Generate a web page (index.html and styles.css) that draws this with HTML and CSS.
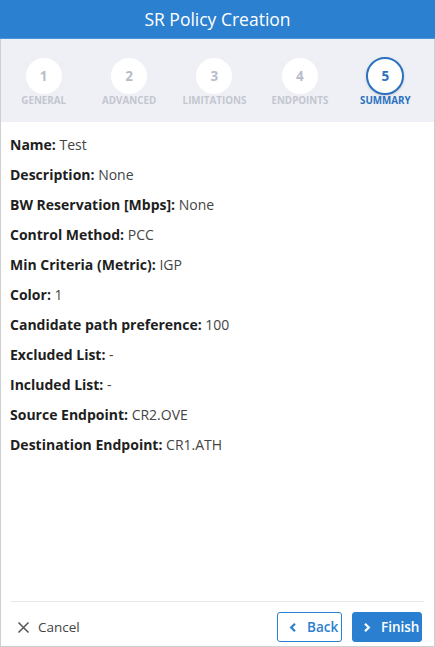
FILE: index.html
```html
<!DOCTYPE html>
<html>
<head>
<meta charset="utf-8">
<link rel="stylesheet" href="styles.css">
</head>
<body>
<div class="dialog">
  <div class="header">SR Policy Creation</div>
  <div class="stepper">
    <div class="step"><div class="circle">1</div><div class="label">General</div></div>
    <div class="step"><div class="circle">2</div><div class="label">Advanced</div></div>
    <div class="step"><div class="circle">3</div><div class="label">Limitations</div></div>
    <div class="step"><div class="circle">4</div><div class="label">Endpoints</div></div>
    <div class="step active"><div class="circle">5</div><div class="label">Summary</div></div>
  </div>
  <div class="content">
    <div class="row"><b>Name:</b> Test</div>
    <div class="row"><b>Description:</b> None</div>
    <div class="row"><b>BW Reservation [Mbps]:</b> None</div>
    <div class="row"><b>Control Method:</b> PCC</div>
    <div class="row"><b>Min Criteria (Metric):</b> IGP</div>
    <div class="row"><b>Color:</b> 1</div>
    <div class="row"><b>Candidate path preference:</b> 100</div>
    <div class="row"><b>Excluded List:</b> -</div>
    <div class="row"><b>Included List:</b> -</div>
    <div class="row"><b>Source Endpoint:</b> CR2.OVE</div>
    <div class="row"><b>Destination Endpoint:</b> CR1.ATH</div>
  </div>
  <div class="footer">
    <div class="cancel">
      <svg class="icon" width="13" height="13" viewBox="0 0 13 13"><path d="M1.5 1.5L11.5 11.5M11.5 1.5L1.5 11.5" stroke="#555" stroke-width="1.5" fill="none"/></svg>
      <span>Cancel</span>
    </div>
    <div class="actions">
      <div class="btn btn-back">
        <svg class="icon" width="8" height="11" viewBox="0 0 8 11"><path d="M6 1.8L2.2 5.5 6 9.2" stroke="#2b7fd0" stroke-width="2.2" fill="none"/></svg>
        <span>Back</span>
      </div>
      <div class="btn btn-finish">
        <svg class="icon" width="8" height="11" viewBox="0 0 8 11"><path d="M2 1.8L5.8 5.5 2 9.2" stroke="#fff" stroke-width="2.2" fill="none"/></svg>
        <span>Finish</span>
      </div>
    </div>
  </div>
</div>
</body>
</html>
```
FILE: styles.css
```css
* { box-sizing: border-box; }
html, body { margin: 0; padding: 0; background: #fff; }
body { font-family: "Open Sans", "Noto Sans", sans-serif; }

.dialog {
  width: 435px;
  height: 647px;
  border: 1px solid #cfcfcf;
  border-top: none;
  display: flex;
  flex-direction: column;
  background: #fff;
}

.header {
  height: 39px;
  margin: 0 -1px;
  background: #2b80d0;
  border-bottom: 1px solid #4b95db;
  color: #fff;
  font-size: 17.5px;
  display: flex;
  align-items: center;
  justify-content: center;
}

.stepper {
  height: 83px;
  background: #eff0f5;
  display: grid;
  grid-template-columns: repeat(5, 1fr);
  padding: 19px 6px 0 0;
}

.step {
  display: flex;
  flex-direction: column;
  align-items: center;
}

.circle {
  width: 36px;
  height: 36px;
  border-radius: 50%;
  background: #fff;
  color: #b9bdc9;
  font-weight: 700;
  font-size: 13.5px;
  display: flex;
  align-items: center;
  justify-content: center;
}

.label {
  margin-top: 0;
  font-size: 9.8px;
  font-weight: 700;
  color: #c3c6d0;
  text-transform: uppercase;
}

.step.active .circle {
  border: 2px solid #2a72bf;
  color: #2a72bf;
  width: 38px;
  height: 38px;
  margin-top: -1px;
  box-shadow: 0 1px 3px rgba(0,0,0,0.15);
}
.step.active .label { color: #2a72bf; margin-top: -1px; }

.content {
  flex: 1;
  padding: 13px 9px 0;
}

.row {
  height: 30px;
  font-size: 14px;
  color: #444;
}
.row b { color: #1e1e1e; }

.footer {
  margin: 0 10px;
  border-top: 1px solid #e8e8e8;
  height: 45px;
  display: flex;
  align-items: center;
  justify-content: space-between;
}

.icon { display: block; flex-shrink: 0; }

.cancel {
  display: flex;
  align-items: center;
  gap: 8px;
  padding-left: 6px;
  font-size: 13.5px;
  color: #444;
  margin-top: 6px;
}

.actions {
  display: flex;
  gap: 10px;
  margin-top: 6px;
  margin-right: 2px;
}

.btn {
  height: 30px;
  border-radius: 3px;
  font-size: 13.5px;
  font-weight: 600;
  display: flex;
  align-items: center;
  gap: 10px;
}
.btn-back {
  width: 65px;
  background: #fff;
  border: 1px solid #2b7fd0;
  color: #2b7fd0;
  padding-left: 11px;
}
.btn-finish {
  width: 70px;
  background: #2b7fd0;
  border: 1px solid #2b7fd0;
  color: #fff;
  padding-left: 10px;
}
```
